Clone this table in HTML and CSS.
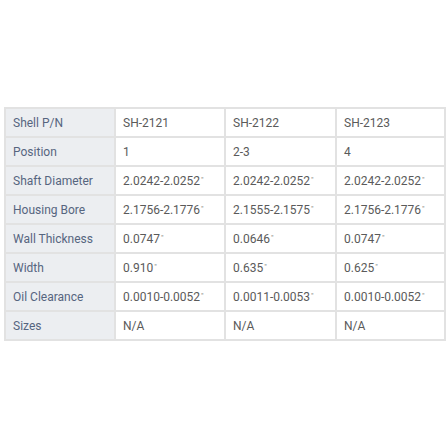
FILE: index.html
```html
<!DOCTYPE html>
<html>
<head>
<meta charset="utf-8">
<link rel="stylesheet" href="styles.css">
</head>
<body>
<div class="page">
<table class="spec">
<colgroup><col class="c1"><col class="c2"><col class="c3"><col class="c4"></colgroup>
<tr><th>Shell P/N</th><td>SH-2121</td><td>SH-2122</td><td>SH-2123</td></tr>
<tr><th>Position</th><td>1</td><td>2-3</td><td>4</td></tr>
<tr><th>Shaft Diameter</th><td>2.0242-2.0252<span class="in">"</span></td><td>2.0242-2.0252<span class="in">"</span></td><td>2.0242-2.0252<span class="in">"</span></td></tr>
<tr><th>Housing Bore</th><td>2.1756-2.1776<span class="in">"</span></td><td>2.1555-2.1575<span class="in">"</span></td><td>2.1756-2.1776<span class="in">"</span></td></tr>
<tr><th>Wall Thickness</th><td>0.0747<span class="in">"</span></td><td>0.0646<span class="in">"</span></td><td>0.0747<span class="in">"</span></td></tr>
<tr><th>Width</th><td>0.910<span class="in">"</span></td><td>0.635<span class="in">"</span></td><td>0.625<span class="in">"</span></td></tr>
<tr><th>Oil Clearance</th><td>0.0010-0.0052<span class="in">"</span></td><td>0.0011-0.0053<span class="in">"</span></td><td>0.0010-0.0052<span class="in">"</span></td></tr>
<tr><th>Sizes</th><td>N/A</td><td>N/A</td><td>N/A</td></tr>
</table>
</div>
</body>
</html>
```
FILE: styles.css
```css
html, body {
  margin: 0;
  padding: 0;
  background: #ffffff;
}
.page {
  padding: 107px 0 0 4px;
}
.spec {
  border-collapse: collapse;
  width: 440px;
  table-layout: fixed;
  font-family: Roboto, "Liberation Sans", sans-serif;
  font-size: 12px;
}
.c1 { width: 110px; }
.c2 { width: 110px; }
.c3 { width: 111px; }
.c4 { width: 109px; }
.spec th, .spec td {
  padding: 0 0 0 7px;
  border: 2px solid #e2e2e2;
  text-align: left;
  font-weight: normal;
  white-space: nowrap;
}
.spec tr { height: 29px; }
.spec th {
  background: #eceef1;
  color: #56657f;
}
.spec td {
  color: #5a5a5a;
}
.in {
  font-size: 8px;
  vertical-align: 3px;
  margin-left: 1px;
  color: #888;
}
```
